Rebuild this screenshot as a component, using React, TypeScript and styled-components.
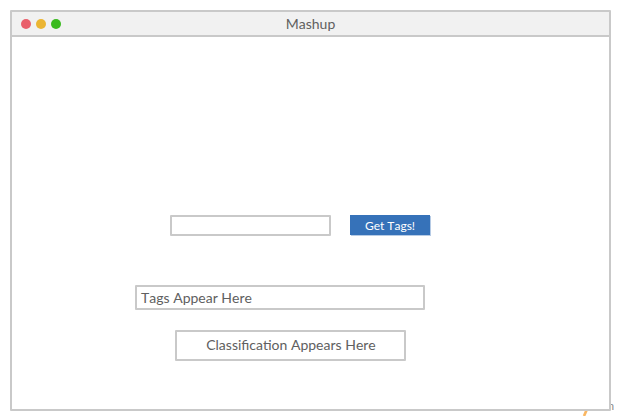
import React from "react";
import styled, { createGlobalStyle } from "styled-components";

const Global = createGlobalStyle`
  * { box-sizing: border-box; }
  html, body { margin: 0; background: #fff; overflow: hidden; }
  body { font-family: Lato, sans-serif; color: #606060; font-kerning: none; -webkit-font-smoothing: antialiased; }
`;
const Page = styled.div`
  position: relative;
  width: 620px;
  height: 420px;
  padding: 10px;
`;
const Window = styled.main`
  position: relative;
  width: 601px;
  height: 401px;
  border: 2px solid #c9c9c9;
  border-radius: 1px;
  background: #fff;
`;
const Watermark = styled.span`
  position: absolute;
  right: 6px;
  bottom: 7px;
  color: #858585;
  font-size: 11px;
  line-height: 14px;
`;
const Stroke = styled.svg`
  position: absolute;
  left: 580px;
  top: 408px;
`;
const TitleBar = styled.header`
  height: 25px;
  display: grid;
  grid-template-columns: 60px 1fr 60px;
  align-items: center;
  background: #f1f1f1;
  border-bottom: 2px solid #c9c9c9;
`;
const Lights = styled.div`
  display: flex;
  gap: 5px;
  padding-left: 9px;
`;
const Light = styled.span<{ $color: string }>`
  width: 10px;
  height: 10px;
  border-radius: 50%;
  background: ${(p) => p.$color};
`;
const Title = styled.h1`
  margin: 0;
  font-size: 14px;
  line-height: 20px;
  font-weight: 400;
  text-align: center;
`;
const Content = styled.section`
  padding: 178px 0 0 123px;
`;
const SearchRow = styled.form`
  display: flex;
  gap: 19px;
  margin-left: 35px;
`;
const Field = styled.input`
  width: 161px;
  height: 21px;
  border: 2px solid #c9c9c9;
  border-radius: 1px;
  background: #fff;
  padding: 0 4px;
  outline: 0;
`;
const Button = styled.button`
  width: 80px;
  height: 20px;
  border: 0;
  background: #3672b9;
  color: #fff;
  font: 12px/19px Lato, sans-serif;
  font-kerning: none;
  padding: 1px 0 0;
  box-shadow: 1px 1px 0 #b6cbe5;
`;
const Output = styled.div<{ $centered?: boolean }>`
  width: ${(p) => (p.$centered ? 231 : 290)}px;
  height: ${(p) => (p.$centered ? 31 : 25)}px;
  margin: ${(p) => (p.$centered ? "20px 0 0 40px" : "49px 0 0")};
  border: 2px solid #c9c9c9;
  border-radius: 1px;
  padding: ${(p) => (p.$centered ? "0 3px 0 4px" : "0 4px")};
  font-size: 14px;
  line-height: ${(p) => (p.$centered ? 26 : 21)}px;
  text-align: ${(p) => (p.$centered ? "center" : "left")};
`;

export default function App() {
  return (
    <Page>
      <Global />
      <Watermark>m</Watermark>
      <Stroke width="12" height="8" viewBox="0 0 12 8" aria-hidden="true">
        <path d="M7.5 0 4 8" fill="none" stroke="#fab762" strokeWidth="2.6" />
      </Stroke>
      <Window>
        <TitleBar>
          <Lights>
            <Light $color="#e95f6b" />
            <Light $color="#ebb533" />
            <Light $color="#3aba1e" />
          </Lights>
          <Title>Mashup</Title>
        </TitleBar>
        <Content>
          <SearchRow>
            <Field aria-label="Source" />
            <Button type="button">Get Tags!</Button>
          </SearchRow>
          <Output>Tags Appear Here</Output>
          <Output $centered>Classification Appears Here</Output>
        </Content>
      </Window>
    </Page>
  );
}
